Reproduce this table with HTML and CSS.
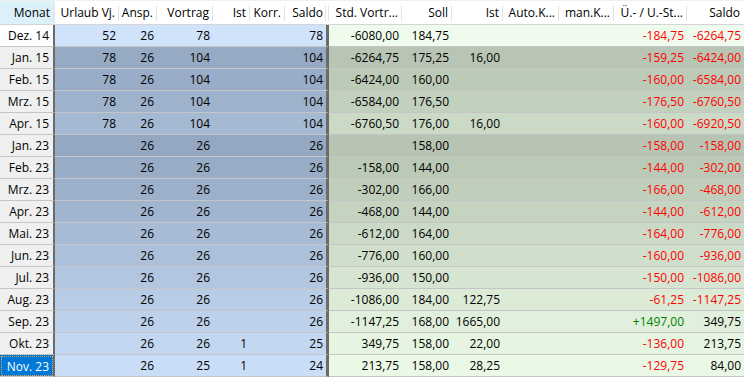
FILE: index.html
```html
<!DOCTYPE html>
<html lang="de">
<head>
<meta charset="utf-8">
<title>Urlaubskonto</title>
<link rel="stylesheet" href="styles.css">
</head>
<body>
<div class="grid">
  <div class="hdr">
    <span class="h hm">Monat</span>
    <span class="h">Urlaub Vj.</span>
    <span class="h">Ansp.</span>
    <span class="h">Vortrag</span>
    <span class="h">Ist</span>
    <span class="h">Korr.</span>
    <span class="h hs">Saldo</span>
    <span class="h">Std. Vortr...</span>
    <span class="h">Soll</span>
    <span class="h">Ist</span>
    <span class="h">Auto.K...</span>
    <span class="h">man.K...</span>
    <span class="h">Ü.- / U.-St...</span>
    <span class="h hl">Saldo</span>
  </div>

  <div class="row r1"><span class="m first">Dez. 14</span><span class="l">52</span><span class="l">26</span><span class="l">78</span><span class="l"></span><span class="l"></span><span class="l ls">78</span><span class="r">-6080,00</span><span class="r">184,75</span><span class="r"></span><span class="r"></span><span class="r"></span><span class="r neg">-184,75</span><span class="r neg">-6264,75</span></div>
  <div class="row r2"><span class="m">Jan. 15</span><span class="l">78</span><span class="l">26</span><span class="l">104</span><span class="l"></span><span class="l"></span><span class="l ls">104</span><span class="r">-6264,75</span><span class="r">175,25</span><span class="r">16,00</span><span class="r"></span><span class="r"></span><span class="r neg">-159,25</span><span class="r neg">-6424,00</span></div>
  <div class="row r3"><span class="m">Feb. 15</span><span class="l">78</span><span class="l">26</span><span class="l">104</span><span class="l"></span><span class="l"></span><span class="l ls">104</span><span class="r">-6424,00</span><span class="r">160,00</span><span class="r"></span><span class="r"></span><span class="r"></span><span class="r neg">-160,00</span><span class="r neg">-6584,00</span></div>
  <div class="row r4"><span class="m">Mrz. 15</span><span class="l">78</span><span class="l">26</span><span class="l">104</span><span class="l"></span><span class="l"></span><span class="l ls">104</span><span class="r">-6584,00</span><span class="r">176,50</span><span class="r"></span><span class="r"></span><span class="r"></span><span class="r neg">-176,50</span><span class="r neg">-6760,50</span></div>
  <div class="row r5"><span class="m">Apr. 15</span><span class="l">78</span><span class="l">26</span><span class="l">104</span><span class="l"></span><span class="l"></span><span class="l ls">104</span><span class="r">-6760,50</span><span class="r">176,00</span><span class="r">16,00</span><span class="r"></span><span class="r"></span><span class="r neg">-160,00</span><span class="r neg">-6920,50</span></div>
  <div class="row r6"><span class="m">Jan. 23</span><span class="l"></span><span class="l">26</span><span class="l">26</span><span class="l"></span><span class="l"></span><span class="l ls">26</span><span class="r"></span><span class="r">158,00</span><span class="r"></span><span class="r"></span><span class="r"></span><span class="r neg">-158,00</span><span class="r neg">-158,00</span></div>
  <div class="row r7"><span class="m">Feb. 23</span><span class="l"></span><span class="l">26</span><span class="l">26</span><span class="l"></span><span class="l"></span><span class="l ls">26</span><span class="r">-158,00</span><span class="r">144,00</span><span class="r"></span><span class="r"></span><span class="r"></span><span class="r neg">-144,00</span><span class="r neg">-302,00</span></div>
  <div class="row r8"><span class="m">Mrz. 23</span><span class="l"></span><span class="l">26</span><span class="l">26</span><span class="l"></span><span class="l"></span><span class="l ls">26</span><span class="r">-302,00</span><span class="r">166,00</span><span class="r"></span><span class="r"></span><span class="r"></span><span class="r neg">-166,00</span><span class="r neg">-468,00</span></div>
  <div class="row r9"><span class="m">Apr. 23</span><span class="l"></span><span class="l">26</span><span class="l">26</span><span class="l"></span><span class="l"></span><span class="l ls">26</span><span class="r">-468,00</span><span class="r">144,00</span><span class="r"></span><span class="r"></span><span class="r"></span><span class="r neg">-144,00</span><span class="r neg">-612,00</span></div>
  <div class="row r10"><span class="m">Mai. 23</span><span class="l"></span><span class="l">26</span><span class="l">26</span><span class="l"></span><span class="l"></span><span class="l ls">26</span><span class="r">-612,00</span><span class="r">164,00</span><span class="r"></span><span class="r"></span><span class="r"></span><span class="r neg">-164,00</span><span class="r neg">-776,00</span></div>
  <div class="row r11"><span class="m">Jun. 23</span><span class="l"></span><span class="l">26</span><span class="l">26</span><span class="l"></span><span class="l"></span><span class="l ls">26</span><span class="r">-776,00</span><span class="r">160,00</span><span class="r"></span><span class="r"></span><span class="r"></span><span class="r neg">-160,00</span><span class="r neg">-936,00</span></div>
  <div class="row r12"><span class="m">Jul. 23</span><span class="l"></span><span class="l">26</span><span class="l">26</span><span class="l"></span><span class="l"></span><span class="l ls">26</span><span class="r">-936,00</span><span class="r">150,00</span><span class="r"></span><span class="r"></span><span class="r"></span><span class="r neg">-150,00</span><span class="r neg">-1086,00</span></div>
  <div class="row r13"><span class="m">Aug. 23</span><span class="l"></span><span class="l">26</span><span class="l">26</span><span class="l"></span><span class="l"></span><span class="l ls">26</span><span class="r">-1086,00</span><span class="r">184,00</span><span class="r">122,75</span><span class="r"></span><span class="r"></span><span class="r neg">-61,25</span><span class="r neg">-1147,25</span></div>
  <div class="row r14"><span class="m">Sep. 23</span><span class="l"></span><span class="l">26</span><span class="l">26</span><span class="l"></span><span class="l"></span><span class="l ls">26</span><span class="r">-1147,25</span><span class="r">168,00</span><span class="r">1665,00</span><span class="r"></span><span class="r"></span><span class="r pos">+1497,00</span><span class="r">349,75</span></div>
  <div class="row r15"><span class="m">Okt. 23</span><span class="l"></span><span class="l">26</span><span class="l">26</span><span class="l">1</span><span class="l"></span><span class="l ls">25</span><span class="r">349,75</span><span class="r">158,00</span><span class="r">22,00</span><span class="r"></span><span class="r"></span><span class="r neg">-136,00</span><span class="r">213,75</span></div>
  <div class="row r16"><span class="m sel"><span class="focus">Nov. 23</span></span><span class="l"></span><span class="l">26</span><span class="l">25</span><span class="l">1</span><span class="l"></span><span class="l ls">24</span><span class="r">213,75</span><span class="r">158,00</span><span class="r">28,25</span><span class="r"></span><span class="r"></span><span class="r neg">-129,75</span><span class="r">84,00</span></div>
</div>
</body>
</html>
```

FILE: styles.css
```css
html, body {
  margin: 0;
  padding: 0;
  background: #ffffff;
}

body {
  font-family: "Open Sans", "Noto Sans", sans-serif;
  font-size: 12px;
  color: #000000;
  width: 744px;
  height: 378px;
  overflow: hidden;
}

.grid {
  display: flex;
  flex-direction: column;
}

.hdr,
.row {
  display: grid;
  grid-template-columns: 55px 64px 38px 56px 37px 35px 44px 73px 50px 51px 56px 55px 73px 57px;
}

.hdr {
  height: 25px;
  box-sizing: border-box;
  border-top: 1px solid #f0f0f0;
  border-bottom: 1px solid #d5d5d5;
  background: #ffffff;
}

.h {
  display: flex;
  align-items: center;
  justify-content: flex-end;
  padding-right: 4px;
  white-space: nowrap;
  overflow: hidden;
  background-image: linear-gradient(#e3e3e3, #e3e3e3);
  background-repeat: no-repeat;
  background-position: right 0 top 4px;
  background-size: 1px 16px;
}

.hm {
  background-color: #dcf0fa;
  background-position: right 1px top 4px;
  padding-right: 5px;
}

.hs {
  background-image: linear-gradient(#e3e3e3, #e3e3e3), linear-gradient(#e3e3e3, #e3e3e3);
  background-position: right 3px top 4px, right 0 top 4px;
  background-size: 1px 16px, 1px 16px;
  padding-right: 6px;
}

.hl {
  background-image: none;
}

.row {
  height: 22px;
  box-sizing: border-box;
}

.row > span {
  display: flex;
  align-items: center;
  justify-content: flex-end;
  padding-right: 3px;
  white-space: nowrap;
  overflow: hidden;
  box-sizing: border-box;
  border-bottom: 1px solid #c5c5c5;
}

.m {
  background: #f0f0f0;
  border-right: 2px solid #6b6b6b;
  padding-right: 4px !important;
}

.m.first {
  background: #ffffff;
}

.l {
  background: var(--lb);
}

.ls {
  border-right: 3px solid #6b6b6b;
  padding-right: 3px;
}

.r {
  background: var(--rb);
}

.neg { color: #ff0000; }
.pos { color: #008000; }

.m.sel {
  background: #0078d7;
  color: #ffffff;
  padding: 0 !important;
  align-items: stretch;
}

.focus {
  flex: 1;
  display: flex;
  align-items: center;
  justify-content: flex-end;
  padding-right: 3px;
  margin: 1px 0 0 1px;
  border: 1px dotted #f0a040;
}

.r1  { --lb: #d0e3fb; --rb: #effbec; }
.r2  { --lb: #96aac4; --rb: #b8c5b4; }
.r3  { --lb: #99adc8; --rb: #bccab8; }
.r4  { --lb: #9eb2cc; --rb: #c2d0be; }
.r5  { --lb: #a6b9d2; --rb: #cadac6; }
.r6  { --lb: #94a8c2; --rb: #b7c4b3; }
.r7  { --lb: #98acc6; --rb: #bbc9b7; }
.r8  { --lb: #9cb0ca; --rb: #c0cebc; }
.r9  { --lb: #a1b5cf; --rb: #c5d4c1; }
.r10 { --lb: #a7bbd4; --rb: #cbdac7; }
.r11 { --lb: #acc0d9; --rb: #d0dfcc; }
.r12 { --lb: #b2c6df; --rb: #d5e5d1; }
.r13 { --lb: #b8cce5; --rb: #dbebd6; }
.r14 { --lb: #bdd1ea; --rb: #e0f0dc; }
.r15 { --lb: #c3d7f0; --rb: #e5f5e1; }
.r16 { --lb: #c9ddf6; --rb: #eaf9e6; }
```
